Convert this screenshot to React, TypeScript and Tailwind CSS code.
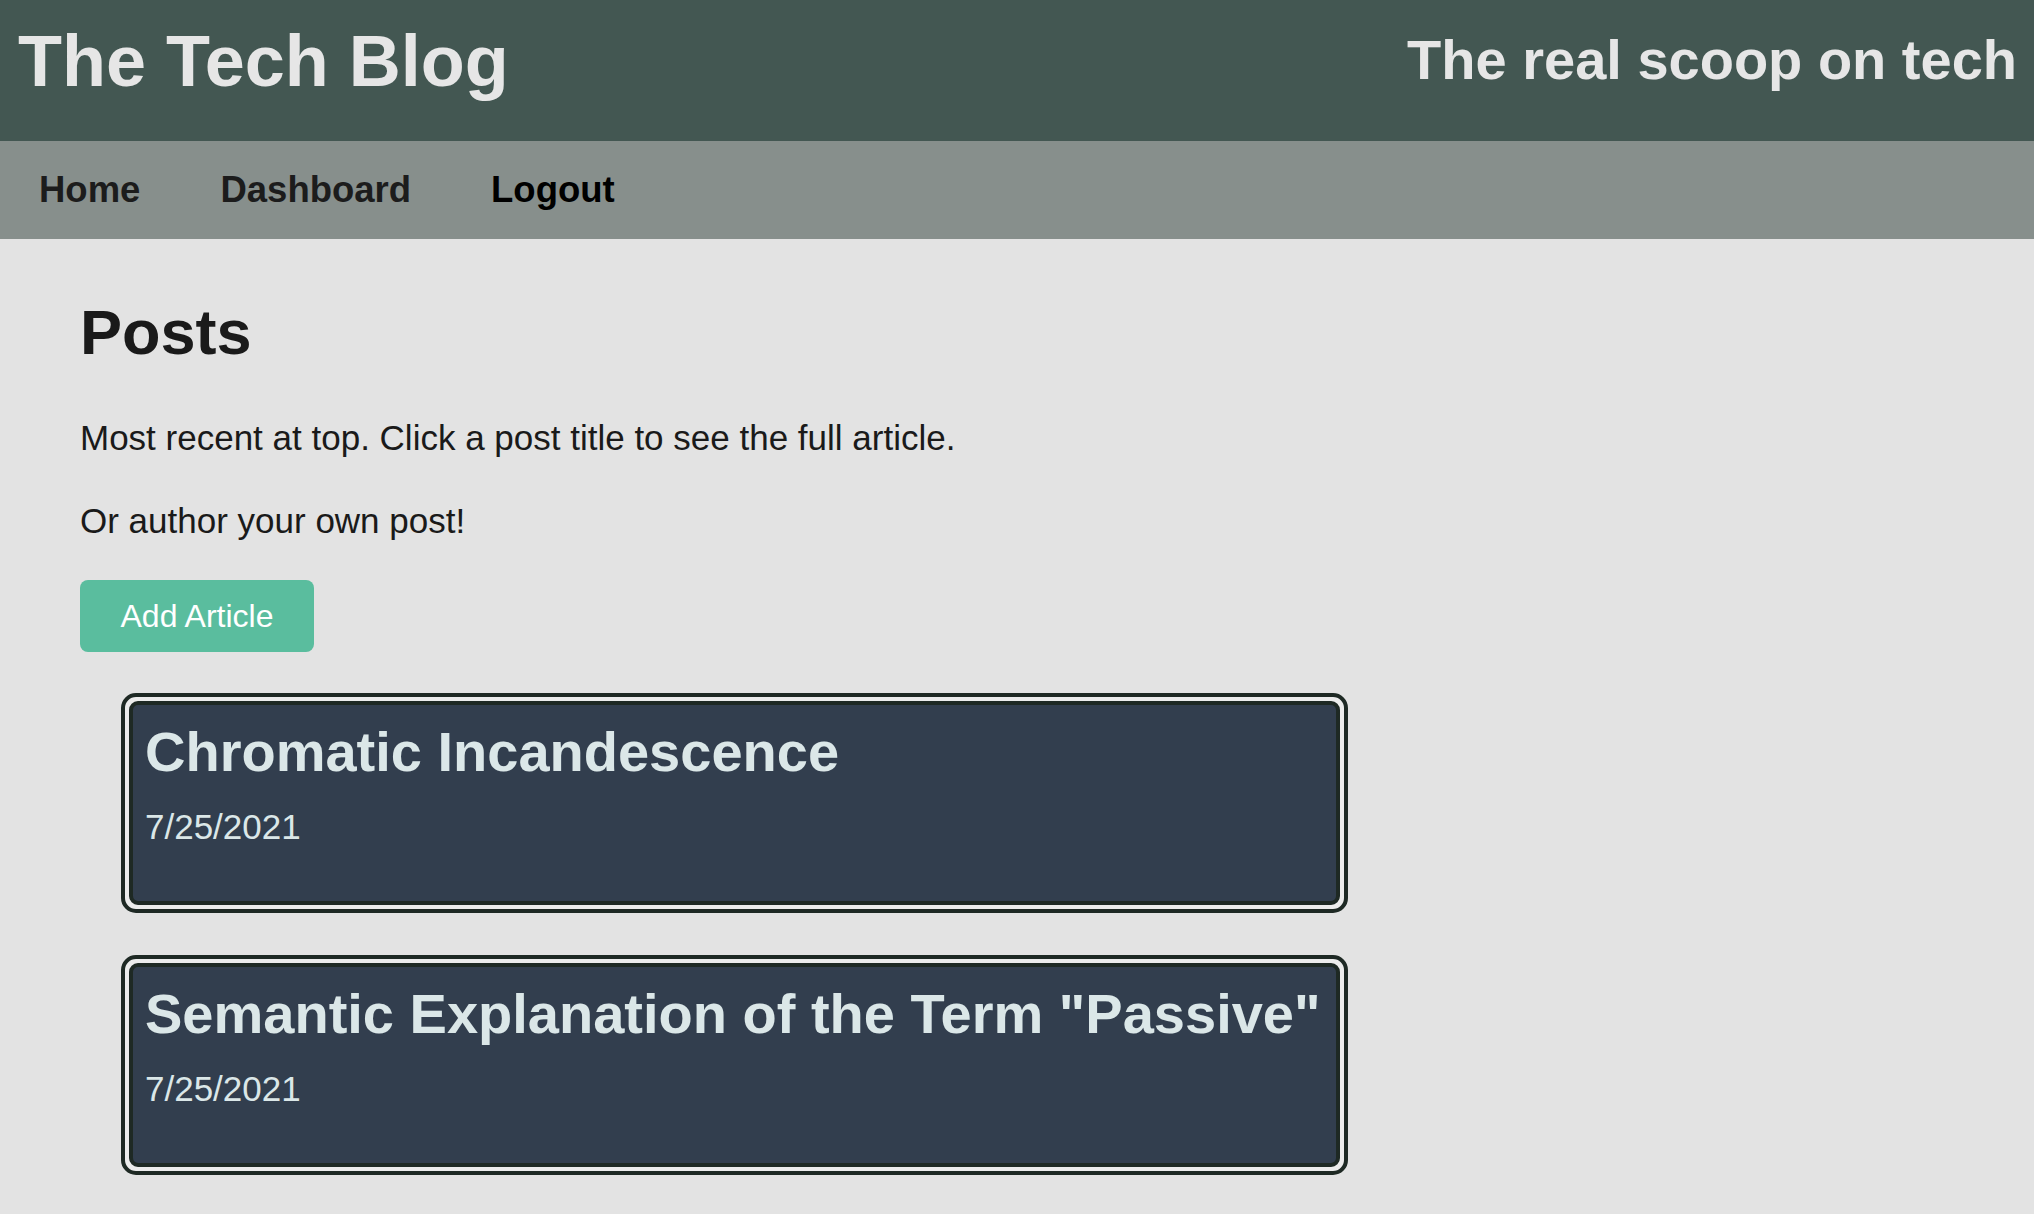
const posts = [
  { title: "Chromatic Incandescence", date: "7/25/2021" },
  { title: 'Semantic Explanation of the Term "Passive"', date: "7/25/2021" },
];

function PostCard({ title, date }: { title: string; date: string }) {
  return (
    <div className="w-[1227px] h-[220px] rounded-[15px] border-4 border-[#1e2924] bg-[#ececec] p-[4px]">
      <div className="h-full rounded-[9px] border-4 border-[#1e2924] bg-[#323e4e] pl-[12px] pt-[19px] text-[#dbe7e8]">
        <h2 className="whitespace-nowrap text-[56px] font-bold leading-none">{title}</h2>
        <p className="mt-[29px] text-[35px] leading-none">{date}</p>
      </div>
    </div>
  );
}

export default function App() {
  return (
    <div className="min-h-screen bg-[#e3e3e3] font-['Liberation_Sans',Arial,sans-serif]">
      <header className="flex h-[141px] items-start justify-between bg-[#435752] pl-[18px] pr-[17px]">
        <h1 className="mt-[25px] text-[72px] font-bold leading-none text-[#e6e6e6]">The Tech Blog</h1>
        <p className="mt-[32px] text-[56px] font-bold leading-none text-[#e6e6e6]">The real scoop on tech</p>
      </header>

      <nav className="flex h-[98px] items-center gap-[80px] bg-[#878f8c] pl-[39px] text-[36.5px] font-bold leading-none">
        <a className="text-[#1c1c1c]">Home</a>
        <a className="text-[#1c1c1c]">Dashboard</a>
        <a className="text-black">Logout</a>
      </nav>

      <main className="pl-[80px] pb-10 text-[#1a1a1a]">
        <h2 className="pt-[62px] text-[63px] font-bold leading-none">Posts</h2>
        <p className="mt-[56px] text-[35px] leading-none">
          Most recent at top. Click a post title to see the full article.
        </p>
        <p className="mt-[48px] text-[35px] leading-none">Or author your own post!</p>
        <button className="mt-[42px] flex h-[72px] w-[234px] items-center justify-center rounded-[8px] bg-[#5abd9e] text-[32px] text-white">
          Add Article
        </button>

        <div className="mt-[41px] ml-[41px] flex flex-col gap-[42px]">
          {posts.map((p, i) => (
            <PostCard key={i} title={p.title} date={p.date} />
          ))}
        </div>
      </main>
    </div>
  );
}
